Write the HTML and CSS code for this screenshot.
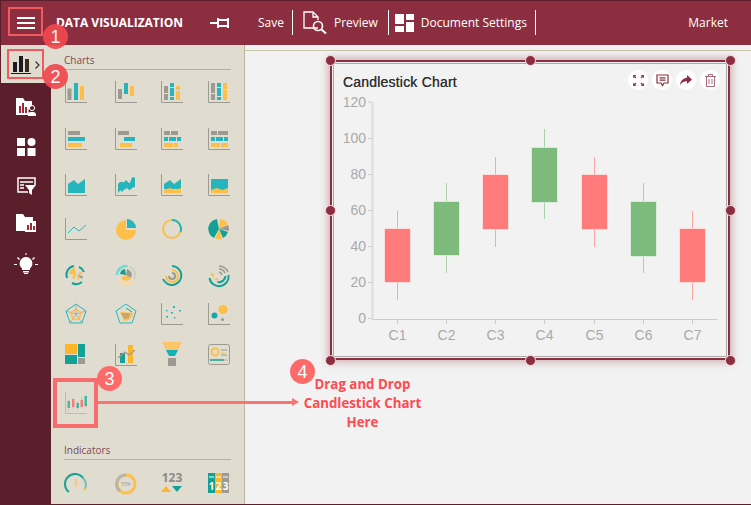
FILE: index.html
```html
<!DOCTYPE html>
<html lang="en">
<head>
  <meta charset="utf-8">
  <title>Data Visualization</title>
  <link rel="stylesheet" href="styles.css">
</head>
<body>
  <div class="app">
    <header class="topbar">
      <button class="menu-btn" aria-label="Menu"><span></span><span></span><span></span></button>
      <div class="app-title">DATA VISUALIZATION</div>
      <svg class="pin" width="20" height="12" viewBox="0 0 20 12" fill="none" stroke="#fff" stroke-width="2"><path d="M0 6h7M8 1v10M9 3h10M9 9h10M18 1v10"/></svg>
      <div class="tool save">Save</div>
      <div class="tool-sep"></div>
      <svg class="tool-icon preview-icon" width="24" height="24" viewBox="0 0 24 24" fill="none" stroke="#fff" stroke-width="1.3"><path d="M15 17H1V1h9l5 5v3M10 1v5h5"/><circle cx="15" cy="15" r="4.5" stroke-width="1.6"/><path d="M18.5 18.5l4.5 4" stroke-width="2"/></svg>
      <div class="tool preview">Preview</div>
      <div class="tool-sep"></div>
      <svg class="tool-icon docset-icon" width="19" height="18" viewBox="0 0 19 18" fill="#fff"><rect width="9" height="10"/><rect x="11" width="8" height="6"/><rect y="12" width="9" height="6"/><rect x="11" y="8" width="8" height="10"/></svg>
      <div class="tool docset">Document Settings</div>
      <div class="tool-sep"></div>
      <div class="tool market">Market</div>
    </header>

    <div class="workspace">
      <nav class="sidebar">
        <div class="side-active">
          <svg width="20" height="19" viewBox="0 0 20 19"><rect x="2" y="7" width="4" height="10" fill="#1d1b22"/><rect x="8" y="1" width="4" height="16" fill="#1d1b22"/><rect x="14" y="4" width="4" height="13" fill="#3a2a1c"/><rect y="18" width="20" height="1" fill="#1d1b22"/></svg>
          <svg class="chev" width="5" height="8" viewBox="0 0 5 8" fill="none" stroke="#333" stroke-width="1.2"><path d="M.5.5L4 4 .5 7.5"/></svg>
        </div>
        <div class="side-icons">
          <svg width="21" height="18" viewBox="0 0 21 18"><path d="M0 0h7l2 3h7v5a5 5 0 0 0-3 7v2H0z" fill="#fff"/><rect x="3" y="8" width="2" height="7" fill="#9c2838"/><rect x="6" y="5" width="2" height="10" fill="#9c2838"/><rect x="9" y="9" width="2" height="6" fill="#9c2838"/><circle cx="16" cy="10" r="2.6" fill="none" stroke="#fff"/><path d="M12 18v-2a3 3 0 0 1 3-2h2a3 3 0 0 1 3 2v2z" fill="#fff"/></svg>
          <svg width="19" height="19" viewBox="0 0 19 19" fill="#fff"><rect width="8" height="8"/><circle cx="14.5" cy="4" r="4"/><rect y="10" width="8" height="8"/><rect x="10.5" y="10" width="8" height="8"/></svg>
          <svg width="19" height="18" viewBox="0 0 19 18" fill="none" stroke="#fff"><path d="M11 15H1V1h17v7" stroke-width="1.5"/><path d="M3 5h13M3 8h4M3 11h4" stroke-width="1.5"/><path d="M8 8h11l-4 5v5l-3-2v-3z" fill="#fff" stroke="none"/></svg>
          <svg width="20" height="18" viewBox="0 0 20 18"><path d="M0 0h7l2 3h8v5h-8v9H0z" fill="#fff"/><rect x="9" y="7" width="11" height="11" fill="#fff"/><rect x="11" y="11" width="2" height="5" fill="#9c2838"/><rect x="14" y="9" width="2" height="7" fill="#9c2838"/><rect x="17" y="12" width="2" height="4" fill="#9c2838"/></svg>
          <svg width="24" height="21" viewBox="0 0 24 21" fill="#fff"><path d="M12 4a6.500 6.500 0 0 0-4 11.500V17h8v-1.500A6.500 6.500 0 0 0 12 4z"/><rect x="9" y="18" width="6" height="1.500"/><rect x="10" y="20" width="4" height="1"/><path d="M0 11h3v1H0zM21 11h3v1h-3zM4 4l2 2-1 1-2-2zM20 4l-2 2 1 1 2-2zM11.500 0h1v2h-1z"/></svg>
        </div>
      </nav>

      <aside class="panel">
        <div class="section-title">Charts</div>
        <div class="icon-grid chart-grid">
          <svg class="ic" viewBox="0 0 22 22"><use href="#axis"/><rect x="2.500" y="7.500" width="4" height="11.500" fill="#9c9a93"/><rect x="9" y="2" width="4" height="17" fill="#26b5bd"/><rect x="15" y="5" width="4" height="14" fill="#fdbf47"/></svg>
          <svg class="ic" viewBox="0 0 22 22"><use href="#axis"/><rect x="3" y="8" width="4" height="10" fill="#9c9a93"/><rect x="9" y="2" width="4" height="11" fill="#26b5bd"/><rect x="15" y="5" width="4" height="10" fill="#fdbf47"/></svg>
          <svg class="ic" viewBox="0 0 22 22"><use href="#axis"/><path d="M3 5h4v7H3zM3 13h4v6H3z" fill="#9c9a93"/><path d="M9 2h4v4H9zM9 7h4v8H9zM9 16h4v3H9z" fill="#26b5bd"/><path d="M15 5h4v4h-4zM15 10h4v9h-4z" fill="#fdbf47"/></svg>
          <svg class="ic" viewBox="0 0 22 22"><use href="#axis"/><path d="M3 2h4v10H3zM3 13h4v6H3z" fill="#9c9a93"/><path d="M9 2h4v4H9zM9 7h4v8H9zM9 16h4v3H9z" fill="#26b5bd"/><path d="M15 2h4v6h-4zM15 9h4v10h-4z" fill="#fdbf47"/></svg>

          <svg class="ic" viewBox="0 0 22 22"><use href="#axis"/><rect x="3" y="3" width="12" height="4" fill="#9c9a93"/><rect x="3" y="9" width="17" height="4" fill="#26b5bd"/><rect x="3" y="15" width="14" height="4" fill="#fdbf47"/></svg>
          <svg class="ic" viewBox="0 0 22 22"><use href="#axis"/><rect x="3" y="3" width="11" height="4" fill="#9c9a93"/><rect x="9" y="9" width="11" height="4" fill="#26b5bd"/><rect x="5" y="15" width="12" height="4" fill="#fdbf47"/></svg>
          <svg class="ic" viewBox="0 0 22 22"><use href="#axis"/><path d="M3 3h6v4H3zM10 3h7v4h-7z" fill="#9c9a93"/><path d="M3 9h4v4H3zM8 9h7v4H8zM16 9h4v4h-4z" fill="#26b5bd"/><path d="M3 15h9v4H3zM13 15h4v4h-4z" fill="#fdbf47"/></svg>
          <svg class="ic" viewBox="0 0 22 22"><use href="#axis"/><path d="M3 3h6v4H3zM10 3h10v4H10z" fill="#9c9a93"/><path d="M3 9h4v4H3zM8 9h7v4H8zM16 9h4v4h-4z" fill="#26b5bd"/><path d="M3 15h9v4H3zM13 15h7v4h-7z" fill="#fdbf47"/></svg>

          <svg class="ic" viewBox="0 0 22 22"><use href="#axis"/><path d="M3 10l6-4 4 4 7-5v14H3z" fill="#26b5bd"/></svg>
          <svg class="ic" viewBox="0 0 22 22"><use href="#axis"/><path d="M3 10q2-3 4-2t3-1 3 1 3-2 4-2v9q-2 0-4 2t-3 0-4 1-3 1-3 2z" fill="#26b5bd"/></svg>
          <svg class="ic" viewBox="0 0 22 22"><use href="#axis"/><path d="M3 10l6-4 4 4 7-5v10H3z" fill="#26b5bd"/><path d="M3 16l6-2 5 2 6-2v5H3z" fill="#fdbf47"/></svg>
          <svg class="ic" viewBox="0 0 22 22"><use href="#axis"/><rect x="3" y="5" width="17" height="14" fill="#26b5bd"/><path d="M3 16l6-2 5 2 6-2v5H3z" fill="#fdbf47"/></svg>

          <svg class="ic" viewBox="0 0 22 22"><use href="#axis"/><path d="M3 15l6-6 5 4 7-6" fill="none" stroke="#26b5bd"/></svg>
          <svg class="ic" viewBox="0 0 22 22"><path d="M11 2a10 10 0 1 0 10 10H11z" fill="#fdbf47"/><path d="M12 1a9 9 0 0 1 9 9h-9z" fill="#26b5bd"/></svg>
          <svg class="ic" viewBox="0 0 22 22" fill="none" stroke-width="2"><circle cx="11" cy="11" r="9" stroke="#fdbf47"/><path d="M11 2a9 9 0 0 1 8.500 12" stroke="#26b5bd"/></svg>
          <svg class="ic" viewBox="0 0 22 22"><path d="M11 11L9 1A10 10 0 0 0 6 20z" fill="#14a095"/><path d="M11 11l1-10a10 10 0 0 1 8 5z" fill="#fdbf47"/><path d="M11 11l9-4a10 10 0 0 1 1 6z" fill="#9c9a93"/><path d="M11 11l9 3a10 10 0 0 1-5 6z" fill="#14a095"/><path d="M11 11l3 10a10 10 0 0 1-7-1z" fill="#fdbf47"/></svg>

          <svg class="ic" viewBox="0 0 22 22" fill="none"><path d="M2 13A9 9 0 0 1 9 1M14 2a9 9 0 0 1 5 5M7 18a9 9 0 0 0 10-1" stroke="#14a095" stroke-width="2"/><path d="M11 10L4 9a7 7 0 0 1 6-6zM11 10l-4 1 2 4zM12 10l4-4 1 3zM12 11l3 2-2 2z" fill="#fdbf47"/><path d="M12 10l6 1-1 3z" fill="#9c9a93"/></svg>
          <svg class="ic" viewBox="0 0 22 22" fill="none"><circle cx="11" cy="10" r="9" stroke="#6adcd4" stroke-width="2.500" pathLength="100" stroke-dasharray="28 72" stroke-dashoffset="50"/><circle cx="11" cy="10" r="9" stroke="#d2d0c9" stroke-width="2.500" pathLength="100" stroke-dasharray="26 74" stroke-dashoffset="18"/><circle cx="11" cy="10" r="9" stroke="#fdd9a0" stroke-width="2.500" pathLength="100" stroke-dasharray="30 70" stroke-dashoffset="-10"/><path d="M11 10L5 9a6 6 0 0 1 5-5z" fill="#14a095"/><path d="M11 10l1-6a6 6 0 0 1 4 9z" fill="#9c9a93"/><path d="M11 10l5 3a6 6 0 0 1-10 0z" fill="#fdbf47"/></svg>
          <svg class="ic" viewBox="0 0 22 22" fill="none" stroke-width="2"><path d="M11 1a9.500 9.500 0 1 1-9 13" stroke="#14a095"/><path d="M11 5a6 6 0 1 1-6 6" stroke="#fdbf47"/><path d="M11 8a3 3 0 1 1-3 3" stroke="#9c9a93"/></svg>
          <svg class="ic" viewBox="0 0 22 22" fill="none" stroke-width="1.500"><path d="M11 1a10 10 0 0 1 9 6M11 4a7 7 0 0 1 6 4M11 7a4 4 0 0 1 3 3" stroke="#9c9a93"/><path d="M20.500 10a9.500 9.500 0 0 1-19 3M17.500 11a6.500 6.500 0 0 1-8 6" stroke="#14a095" stroke-width="2"/><path d="M2 8l4 1-1 4zM6 14l4-1 0 3z" fill="#fdbf47"/></svg>

          <svg class="ic" viewBox="0 0 22 22" fill="none"><path d="M11 1l10 7-4 12H5L1 8z" stroke="#26b5bd"/><path d="M11 1v10M21 8l-10 3M17 20l-6-9M5 20l6-9M1 8l10 3" stroke="#9c9a93" stroke-width=".7"/><path d="M11 6l5 4-2 6H8l-2-6z" stroke="#fdbf47" stroke-width="1.500"/></svg>
          <svg class="ic" viewBox="0 0 22 22" fill="none"><path d="M11 1l10 7-4 12H5L1 8z" stroke="#26b5bd"/><path d="M5 9l14 1-5 7-5 1z" fill="#fdbf47"/><path d="M6 10l9 0-1 5-5 1z" fill="#9c9a93" opacity=".6"/><path d="M11 5l6 4" stroke="#14a095"/></svg>
          <svg class="ic" viewBox="0 0 22 22" fill="#26b5bd"><use href="#axis"/><rect x="5" y="7" width="1.500" height="1.500"/><rect x="12" y="3" width="2" height="2"/><rect x="10" y="9" width="2" height="1.500"/><rect x="18" y="7" width="2" height="1.500"/><rect x="5" y="13" width="2" height="1.500"/><rect x="13" y="14" width="1.500" height="1.500"/></svg>
          <svg class="ic" viewBox="0 0 22 22"><use href="#axis"/><circle cx="6.500" cy="12.500" r="3" fill="#14a8ac"/><circle cx="15" cy="6.500" r="4.500" fill="#fdbf47"/><circle cx="14.500" cy="16.500" r="1.600" fill="#9c9a93"/></svg>

          <svg class="ic" viewBox="0 0 22 22"><rect y="0" width="12" height="10" fill="#fdb52a"/><rect y="11" width="12" height="9" fill="#14a095"/><rect x="13" width="7" height="13" fill="#14a095"/><rect x="13" y="14" width="7" height="6" fill="#9c9a93"/></svg>
          <svg class="ic" viewBox="0 0 22 22"><use href="#axis"/><rect x="5" y="9" width="5" height="10" fill="#14a095"/><rect x="13" y="1" width="5" height="18" fill="#fdb52a"/><path d="M3 14l7-6 4 3 6-5" fill="none" stroke="#9c9a93" stroke-width="1.200"/></svg>
          <svg class="ic" viewBox="0 0 22 22"><path d="M1-2h20l-4 8H5z" fill="#fdc468"/><path d="M5 6h12l-3 6H8z" fill="#14b2b8"/><rect x="7" y="14" width="8" height="8" fill="#9c9a93"/></svg>
          <svg class="ic" viewBox="0 0 22 22" fill="none"><rect x=".5" y=".5" width="21" height="20" rx="2" stroke="#9c9a93"/><circle cx="7" cy="8" r="3.500" stroke="#fdbf47" stroke-width="2"/><path d="M13 6h6" stroke="#9c9a93"/><path d="M13 9h4" stroke="#fdbf47"/><path d="M13 11h6" stroke="#9c9a93"/><path d="M2 16h14" stroke="#14a095" stroke-width="1.500"/><path d="M16 16h4" stroke="#c5c3bb" stroke-width="1.500"/></svg>

          <svg class="ic" viewBox="0 0 22 22"><path d="M.5 0v21.500H22" fill="none" stroke="#bdbbae"/><path d="M3.500 8v11M8 6v11M12.500 9v10M16.500 5v10M21 3v13" stroke="#c9b8a8" stroke-width=".7" fill="none"/><rect x="2.500" y="9" width="2.500" height="7" fill="#3fb8a8"/><rect x="7" y="7" width="2.500" height="8" fill="#f77c7c"/><rect x="11.500" y="11" width="2.500" height="5" fill="#3fb8a8"/><rect x="15.500" y="8" width="2.500" height="7" fill="#f77c7c"/><rect x="19.500" y="4" width="2.500" height="10" fill="#3fb8a8"/></svg>
        </div>
        <div class="section-title indicators">Indicators</div>
        <div class="icon-grid">
          <svg class="ic" viewBox="0 0 22 22" fill="none" stroke-width="2"><path d="M4 19a10 10 0 1 1 14-14" stroke="#14a095"/><path d="M18 5a10 10 0 0 1 2 11" stroke="#14a095" opacity=".5"/><path d="M19 17l1-2" stroke="#fdbf47"/><path d="M11 6v8" stroke="#fdbf47" stroke-width="1.200"/></svg>
          <svg class="ic" viewBox="0 0 22 22" fill="none" stroke-width="3"><circle cx="11" cy="11" r="9" stroke="#fdbf47"/><path d="M5 18A9 9 0 0 1 11 2" stroke="#b4b4b0"/><text x="11" y="13" class="ic-tiny">55%</text></svg>
          <svg class="ic" viewBox="0 0 22 22"><text x="11" y="9" class="ic-num">123</text><path d="M0 19l5-6 5 6z" fill="#fdb52a"/><path d="M11 13h10l-5 6z" fill="#14a095"/></svg>
          <svg class="ic" viewBox="0 0 22 22"><rect width="7" height="20" fill="#14a095"/><rect x="7" width="7" height="20" fill="#fdb52a"/><rect x="14" width="7" height="20" fill="#9c9a93"/><path d="M1 4h5M8 4h5M15 4h5" stroke="#fff"/><text x="3.500" y="17" class="ic-digit">1</text><text x="10.500" y="17" class="ic-digit">2</text><text x="17.500" y="17" class="ic-digit">3</text></svg>
        </div>
      </aside>

      <main class="canvas">
        <div class="canvas-strip"></div>
        <div class="widget">
          <span class="handle h-tl"></span><span class="handle h-tc"></span><span class="handle h-tr"></span>
          <span class="handle h-ml"></span><span class="handle h-mr"></span>
          <span class="handle h-bl"></span><span class="handle h-bc"></span><span class="handle h-br"></span>
          <div class="card">
            <div class="card-head">
              <div class="card-title">Candlestick Chart</div>
              <div class="card-actions">
                <span class="round-btn"><svg width="11" height="11" viewBox="0 0 11 11" fill="none" stroke="#8c2e40" stroke-width="1.300"><path d="M0 3V0h3M11 3V0H8M0 8v3h3M11 8v3H8M1 1l2 2M10 1L8 3M1 10l2-2M10 10L8 8"/></svg></span>
                <span class="round-btn"><svg width="13" height="13" viewBox="0 0 13 13" fill="none" stroke="#8c2e40" stroke-width="1.200"><path d="M1 1h11v8H8l-1.500 2.500L5 9H1zM3.500 3.800h6M3.500 6.200h6"/></svg></span>
                <span class="round-btn"><svg width="12" height="10" viewBox="0 0 12 10" fill="#8c2e40"><path d="M7 0l5 4.500L7 9V6.300C4 6.300 2 7.300 0 10c.5-4 3-7 7-7.300z"/></svg></span>
                <span class="round-btn"><svg width="11" height="13" viewBox="0 0 11 13" fill="none" stroke="#a86b77"><path d="M0 2.500h11M3.500 2.500V.5h4v2M1.500 2.500v10h8v-10M4 5v5M7 5v5"/></svg></span>
              </div>
            </div>
            <svg class="plot" width="392" height="262" viewBox="334 94 392 262">
              <g class="axis-lines">
                <path d="M372.500 102V319" stroke="#ddd" stroke-width="2"/>
                <path d="M368 102h4M368 138.500h4M368 174.500h4M368 210.500h4M368 246.500h4M368 282.500h4M368 318.500h4" stroke="#ccc"/>
                <path d="M372 319.500H717" stroke="#ccc"/>
                <path d="M397.500 320v4M446.500 320v4M495.500 320v4M544.500 320v4M594.500 320v4M643.500 320v4M692.500 320v4" stroke="#ccc"/>
              </g>
              <g class="y-labels">
                <text x="366" y="107">120</text><text x="366" y="143">100</text><text x="366" y="179">80</text><text x="366" y="215">60</text><text x="366" y="251">40</text><text x="366" y="287">20</text><text x="366" y="323">0</text>
              </g>
              <g class="x-labels">
                <text x="397.500" y="340">C1</text><text x="446.500" y="340">C2</text><text x="495.500" y="340">C3</text><text x="544.500" y="340">C4</text><text x="594.500" y="340">C5</text><text x="643.500" y="340">C6</text><text x="692.500" y="340">C7</text>
              </g>
              <g class="candle down"><path class="wick" d="M397.500 211V300"/><rect x="384.500" y="228.500" width="26" height="54"/></g>
              <g class="candle up"><path class="wick" d="M446.500 183V273"/><rect x="433.500" y="201.500" width="26" height="54"/></g>
              <g class="candle down"><path class="wick" d="M495.500 157V247"/><rect x="482.500" y="174.500" width="26" height="55"/></g>
              <g class="candle up"><path class="wick" d="M544.500 129V219"/><rect x="531.500" y="147.500" width="26" height="55"/></g>
              <g class="candle down"><path class="wick" d="M594.500 157V247"/><rect x="581.500" y="174.500" width="26" height="55"/></g>
              <g class="candle up"><path class="wick" d="M643.500 183V273"/><rect x="630.500" y="201.500" width="26" height="55"/></g>
              <g class="candle down"><path class="wick" d="M692.500 211V300"/><rect x="679.500" y="228.500" width="26" height="54"/></g>
            </svg>
          </div>
        </div>
        <div class="drop-note">Drag and Drop<br>Candlestick Chart<br>Here</div>
      </main>
    </div>

    <div class="mark mark-menu"></div>
    <div class="mark mark-charts"></div>
    <div class="mark mark-candle"></div>
    <div class="drag-arrow"></div>
    <span class="badge badge-1">1</span>
    <span class="badge badge-2">2</span>
    <span class="badge badge-3">3</span>
    <span class="badge badge-4">4</span>
  </div>

  <svg width="0" height="0" class="defs"><defs><path id="axis" d="M.5 0v21.500H22" fill="none" stroke="#9c9a93"/></defs></svg>
</body>
</html>
```

FILE: styles.css
```css
* {
  box-sizing: border-box;
}

body {
  margin: 0;
  font-family: "Open Sans", "Liberation Sans", sans-serif;
  overflow: hidden;
}

.defs {
  position: absolute;
}

.app {
  position: relative;
  display: flex;
  flex-direction: column;
  width: 751px;
  height: 505px;
  border: 1px solid #5a1f2b;
  border-right: 0;
  overflow: hidden;
  background: #f2f2f2;
}

/* top bar */
.topbar {
  display: flex;
  align-items: center;
  flex: none;
  height: 44px;
  padding-bottom: 1px;
  background: #8c2e40;
  color: #ffffff;
  font-size: 12px;
}

.menu-btn {
  display: flex;
  flex-direction: column;
  gap: 3px;
  width: 18px;
  margin-left: 16px;
  padding: 0;
  border: 0;
  background: none;
}

.menu-btn span {
  display: block;
  height: 2px;
  background: #ffffff;
}

.app-title {
  margin-left: 21px;
  font-size: 12px;
  font-weight: 700;
  line-height: 11px;
  letter-spacing: -0.03px;
  white-space: nowrap;
}

.pin {
  margin-left: 27px;
}

.tool {
  white-space: nowrap;
}

.tool.save {
  margin-left: 28px;
}

.tool-sep {
  width: 1px;
  height: 25px;
  margin-left: 8px;
  background: #ffffff;
}

.preview-icon {
  margin-left: 10px;
}

.tool.preview {
  margin-left: 7px;
  padding-right: 2px;
}

.docset-icon {
  margin-left: 6px;
}

.tool.docset {
  margin-left: 7px;
}

.tool.market {
  margin-left: auto;
  padding-right: 23px;
}

/* left rail */
.workspace {
  display: flex;
  flex: 1;
  min-height: 0;
}

.sidebar {
  flex: none;
  width: 50px;
  background: #5a1f2b;
}

.side-active {
  display: flex;
  align-items: center;
  gap: 4px;
  height: 38px;
  padding-left: 10px;
  background: #e0ddd0;
}

.chev {
  margin-top: 1px;
}

.side-icons {
  display: grid;
  grid-template-rows: 40px 39px 37px 39px 30px;
  justify-items: center;
  padding-top: 15px;
}

/* chart gallery */
.panel {
  flex: none;
  width: 194px;
  padding: 8px 0 0 13px;
  background: #e0ddd0;
  border-right: 1px solid #b9b59c;
}

.section-title {
  width: 167px;
  height: 17px;
  padding-bottom: 2px;
  border-bottom: 1px solid #b5b195;
  color: #7d4a55;
  font-size: 10px;
  line-height: 14px;
}

.section-title.indicators {
  margin-top: 29px;
}

.icon-grid {
  display: grid;
  grid-template-columns: 50px 46px 47px 22px;
  margin: 13px 0 0 1px;
}

.chart-grid {
  grid-template-rows: 47px 46px 44px 47px 38px 41px 48px 22px;
  margin-top: 11px;
}

.ic {
  display: block;
  width: 22px;
  height: 22px;
  overflow: visible;
}

.ic-tiny {
  fill: #9c9a93;
  stroke: none;
  font-size: 5px;
  text-anchor: middle;
}

.ic-num {
  fill: #8c8a84;
  font-size: 12px;
  font-weight: 700;
  text-anchor: middle;
}

.ic-digit {
  fill: #ffffff;
  font-size: 10px;
  font-weight: 700;
  text-anchor: middle;
}

/* canvas */
.canvas {
  position: relative;
  flex: 1;
  padding-left: 85px;
}

.canvas-strip {
  height: 6px;
  margin-left: -85px;
  border-bottom: 1px solid #c8c4a8;
}

.widget {
  position: relative;
  width: 400px;
  height: 300px;
  margin-top: 9px;
  padding: 1px;
  border: 2px solid #8c2e40;
  box-shadow: 0 0 8px 2px rgba(140, 46, 64, 0.35);
}

.card {
  display: flex;
  flex-direction: column;
  height: 100%;
  border: 1px solid #a8a8a8;
  background: #f2f2f2;
}

.card-head {
  display: flex;
  align-items: flex-start;
  justify-content: space-between;
  flex: none;
  height: 30px;
  padding: 6px 6px 0 9px;
}

.card-title {
  margin-top: 4px;
  color: #333333;
  font-family: "Liberation Sans", Arial, sans-serif;
  font-size: 14px;
  letter-spacing: 0.2px;
  text-shadow: 0 0 0.5px #333333;
}

.card-actions {
  display: flex;
  gap: 4px;
}

.round-btn {
  display: flex;
  align-items: center;
  justify-content: center;
  width: 20px;
  height: 20px;
  border-radius: 50%;
  background: #ffffff;
}

.plot {
  display: block;
}

.plot text {
  fill: #a9a9a9;
  font-family: "Liberation Sans", Arial, sans-serif;
  font-size: 14px;
}

.y-labels text {
  text-anchor: end;
}

.x-labels text {
  text-anchor: middle;
}

.candle rect {
  stroke: rgba(255, 255, 255, 0.5);
}

.candle.down rect {
  fill: #ff7a7a;
}

.candle.down .wick {
  stroke: #ffa3a3;
}

.candle.up rect {
  fill: #7dbb7d;
}

.candle.up .wick {
  stroke: #a8d2a8;
}

/* selection handles */
.handle {
  position: absolute;
  z-index: 1;
  width: 11px;
  height: 11px;
  border: 1.5px solid #f0dfe2;
  border-radius: 50%;
  background: #8c2e40;
}

.h-tl { left: -7.5px; top: -7.5px; }
.h-tc { left: 192.5px; top: -7.5px; }
.h-tr { right: -7.5px; top: -7.5px; }
.h-ml { left: -7.5px; top: 142.5px; }
.h-mr { right: -7.5px; top: 142.5px; }
.h-bl { left: -7.5px; bottom: -7.5px; }
.h-bc { left: 192.5px; bottom: -7.5px; }
.h-br { right: -7.5px; bottom: -7.5px; }

.drop-note {
  position: absolute;
  left: 0;
  top: 330px;
  width: 235px;
  color: #ff4a52;
  font-size: 13.3px;
  font-weight: 700;
  line-height: 19px;
  text-align: center;
}

/* tutorial marks drawn over the screen */
.mark {
  position: absolute;
  border: 2px solid #f15a5f;
}

.mark-menu {
  left: 7px;
  top: 6px;
  width: 35px;
  height: 29px;
}

.mark-charts {
  left: 6px;
  top: 48px;
  width: 37px;
  height: 30px;
}

.mark-candle {
  left: 52px;
  top: 377px;
  width: 45px;
  height: 50px;
  border: 4px solid #f76c6c;
}

.drag-arrow {
  position: absolute;
  left: 97px;
  top: 400px;
  width: 194px;
  height: 3px;
  background: #fb7474;
}

.drag-arrow::after {
  content: '';
  position: absolute;
  left: 194px;
  top: -3px;
  border-left: 7px solid #fb7474;
  border-top: 4.5px solid transparent;
  border-bottom: 4.5px solid transparent;
}

.badge {
  position: absolute;
  display: flex;
  align-items: center;
  justify-content: center;
  width: 25px;
  height: 25px;
  border-radius: 50%;
  background: #f0484e;
  color: #ffffff;
  font-family: "Liberation Sans", Arial, sans-serif;
  font-size: 18px;
  line-height: 16px;
  opacity: 0.92;
}

.badge-1 { left: 42px; top: 23px; }
.badge-2 { left: 42px; top: 63px; }
.badge-3 { left: 96px; top: 365px; background: #fd6a6a; opacity: 1; }
.badge-4 { left: 289px; top: 358px; background: #fd6a6a; opacity: 1; }
```
